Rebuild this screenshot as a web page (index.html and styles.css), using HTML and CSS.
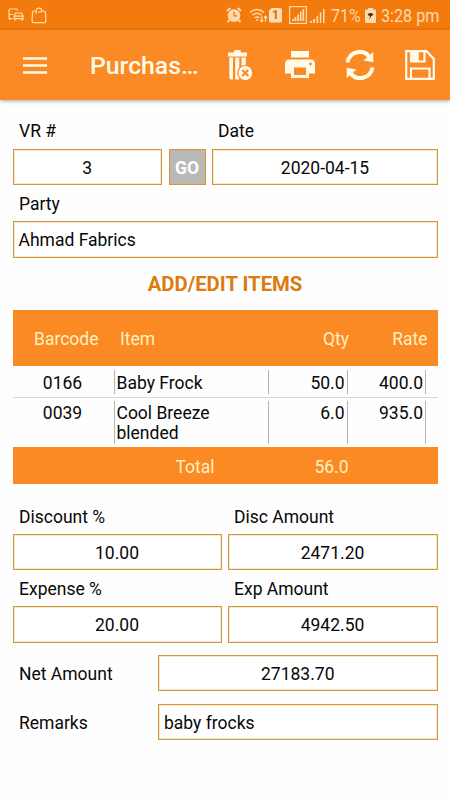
FILE: index.html
```html
<!DOCTYPE html>
<html lang="en">
<head>
<meta charset="utf-8">
<title>Purchase</title>
<link rel="stylesheet" href="styles.css">
</head>
<body>
<header class="status">
  <div class="status-left">
    <svg width="16" height="14" viewBox="0 0 16 14" fill="none" stroke="currentColor" stroke-width="1.2"><path d="M4.5 10.5H1V2.2Q1 1 2.2 1H8.5Q9.5 1 9.5 2.7M1 6.5h4"/><path d="M6.2 11.8V8L7.5 5h6L15 8v3.8M6.2 8.2H15M6.2 10.7H15"/><path d="M2 10.5v1.5M7 11v1.6M14.3 11v1.6" stroke-width="1.5"/></svg>
    <svg width="16" height="17" viewBox="0 0 16 17" fill="none" stroke="currentColor" stroke-width="1.2"><path d="M5.2 4H3Q1.7 4 1.6 5.3L1 13.5Q1 15.7 3 15.7H13Q15 15.7 14.9 13.5L14.4 5.3Q14.3 4 13 4H11"/><path d="M5.2 7V3.5Q5.2 1.2 8 1.2T10.8 3.5V5H7"/></svg>
  </div>
  <div class="status-right">
    <svg class="alarm" width="16" height="16" viewBox="0 0 16 16"><circle cx="8" cy="8.5" r="6.3" fill="currentColor"/><path d="M1 4L4.3 1M15 4L11.7 1M3.5 13L1.5 15M12.500 13L14.500 15" stroke="currentColor" stroke-width="2"/><path d="M8 4.800V8.800H11.300" fill="none" stroke="#f37a0c" stroke-width="1.300"/></svg>
    <svg class="wifi" width="19" height="15" viewBox="0 0 19 15" fill="none" stroke="currentColor" stroke-width="1.500"><path d="M1 4.500Q8 -1.500 15 4.500M3.300 7.300Q8 3.200 12.700 7.300M5.700 10Q8 8 10.300 10"/><circle cx="8" cy="12" r="1.100" fill="currentColor" stroke="none"/><path d="M12.700 8v5.500M11 12l1.700 1.800L14.300 12M16.500 13.700V8.300M14.900 10l1.600-1.800L18.200 10" stroke-width="1.200"/></svg>
    <span class="sim">1</span>
    <svg class="signal-box" width="18" height="18" viewBox="0 0 18 18"><rect x=".6" y=".6" width="16.800" height="16.800" fill="none" stroke="currentColor" stroke-width="1.200"/><path d="M3 13h1.800v2H3zM5.500 11h1.900v4H5.500zM8.300 8.500h1.900V15H8.300zM11 5.700h1.600V15H11zM13.500 3h1.700v12h-1.700z" fill="currentColor"/></svg>
    <svg class="signal" width="15" height="15" viewBox="0 0 15 15"><path d="M0 13h1.800v2H0zM3.200 11H5v4H3.200zM6.500 8h1.700v7H6.500zM9.800 4.500h1.500v10.500H9.800zM13 1h1.500v14H13z" fill="currentColor"/></svg>
    <span class="percent"><b>71%</b></span>
    <svg class="battery" width="11" height="15" viewBox="0 0 11 15"><path d="M3 0h5v1.500h2q1 0 1 1V14q0 1-1 1H1q-1 0-1-1V2.500q0-1 1-1h2z" fill="currentColor"/><path d="M3.300 5.500L6.500 5 8.500 6.800 6.300 8 4.200 11.800 5 8 2.700 7z" fill="#4b250d"/></svg>
    <span class="clock"><b>3:28 pm</b></span>
  </div>
</header>
<nav class="toolbar">
  <svg class="menu" width="24" height="17" viewBox="0 0 24 17"><path d="M0 1.500h24M0 8.500h24M0 15.500h24" stroke="currentColor" stroke-width="2.300"/></svg>
  <h1>Purchas…</h1>
  <div class="actions">
    <svg width="30" height="30" viewBox="0 0 30 30"><path d="M3 2.500h6V1.200Q9 0 10.300 0h4.200Q15.800 0 15.800 1.200V2.500H22v4H3zM4.300 7.500H8V29.500H6.500Q4.300 29.500 4.300 27zM10.200 7.500h4.100V29.500h-4.100zM16.500 7.500H20.800V15L16.500 18z" fill="currentColor"/><circle cx="20.300" cy="23" r="7.500" fill="currentColor" stroke="#fb8a25" stroke-width="1.200"/><path d="M17.300 20l6 6M23.300 20l-6 6" stroke="#fb8a25" stroke-width="2.200"/></svg>
    <svg width="30" height="30" viewBox="0 0 30 30"><path d="M6 1h18v6.500H6z" fill="currentColor"/><path d="M4.500 9.500h21Q30 9.500 30 14v9.500h-6V28H6v-4.500H0V14Q0 9.500 4.500 9.500z" fill="currentColor"/><path d="M9 17.500h12V25H9z" fill="#fb8a25"/><circle cx="25.500" cy="14" r="1.400" fill="#fb8a25"/></svg>
    <svg width="30" height="30" viewBox="0 0 30 30"><path d="M2.500 12.500C4.500 1 18.500-1.500 24.500 7M27.500 17.500C25.500 29 11.500 31.500 5.500 23" fill="none" stroke="currentColor" stroke-width="4"/><path d="M28.300 2V12.300L18.500 10.500zM1.700 28V17.700L11.500 19.500z" fill="currentColor"/></svg>
    <svg width="30" height="30" viewBox="0 0 30 30" fill="none" stroke="currentColor" stroke-width="2.200"><path d="M1.200 1.200H21.500L28.800 9V28.800H1.200zM6 1.200V11.500H19.500V1.200M6 28.800V18.500H24.500V28.800"/><path d="M6 1h7.800v11H6z" fill="currentColor" stroke="none"/></svg>
  </div>
</nav>
<main>
  <section class="top-fields">
    <label class="vr">VR #</label><label class="date">Date</label>
    <div class="box mid">3</div><div class="box go">GO</div><div class="box mid">2020-04-15</div>
  </section>
  <label class="party">Party</label>
  <div class="box">Ahmad Fabrics</div>
  <h2>ADD/EDIT ITEMS</h2>
  <section class="table">
    <div class="row head"><span class="code">Barcode</span><span class="item">Item</span><span class="num">Qty</span><span class="num">Rate</span></div>
    <div class="row line"><span class="code">0166</span><span class="item">Baby Frock</span><span class="num">50.0</span><span class="num">400.0</span></div>
    <div class="row line"><span class="code">0039</span><span class="item">Cool Breeze blended</span><span class="num">6.0</span><span class="num">935.0</span></div>
    <div class="row foot"><span class="total">Total</span><span class="num">56.0</span></div>
  </section>
  <section class="pairs">
    <label>Discount %</label><label>Disc Amount</label>
    <div class="box mid">10.00</div><div class="box mid">2471.20</div>
    <label class="lower">Expense %</label><label class="lower">Exp Amount</label>
    <div class="box mid">20.00</div><div class="box mid">4942.50</div>
  </section>
  <section class="bottom">
    <label>Net Amount</label><div class="box mid">27183.70</div>
    <label>Remarks</label><div class="box">baby frocks</div>
  </section>
</main>
</body>
</html>
```
FILE: styles.css
```css
* { box-sizing: border-box; }
body { margin: 0; background: #fefefe; color: #080808; font: 17.5px/20px Roboto, sans-serif; }
svg { display: block; flex: none; }
.status { height: 30px; background: #f37a0c; color: #ffdfa9; display: flex; justify-content: space-between; align-items: center; padding: 0 11px 0 8px; }
.status-left, .status-right { display: flex; align-items: center; }
.status-left { gap: 7px; }
.status-right { color: #ffd9ac; }
.wifi { margin-left: 7px; }
.sim { width: 13px; height: 15px; margin-left: 1px; background: #ffdcb2; color: #d8690b; border-radius: 2px; clip-path: polygon(25% 0, 100% 0, 100% 100%, 0 100%, 0 20%); font: bold 12px/15px Roboto, sans-serif; text-align: center; }
.signal-box { margin-left: 7px; }
.signal { margin-left: 3px; }
.percent, .clock { font-size: 19px; white-space: nowrap; padding-top: 1px; }
.percent { width: 29px; margin-left: 6px; }
.clock { width: 58px; margin-left: 5px; }
.percent b, .clock b { display: inline-block; font-weight: 400; transform-origin: left; }
.percent b { transform: scaleX(.84); }
.clock b { transform: scaleX(.85); }
.battery { margin-left: 5px; }
.toolbar { height: 70px; background: #fb8a25; color: #fffbe8; display: flex; align-items: center; padding: 0 15px 0 23px; box-shadow: 0 1px 4px rgba(0,0,0,.35); }
h1 { font-size: 24.800px; line-height: 30px; font-weight: 500; margin: 2px 0 0 43px; }
.actions { display: flex; gap: 30px; margin-left: auto; }
main { padding: 21px 12.500px 0; }
label { display: block; padding-left: 6.500px; }
.top-fields { display: grid; grid-template-columns: 149.500px 37px 226px; column-gap: 6.500px; row-gap: 8px; }
.date { grid-column: 3; margin-left: -.5px; }
.vr { grid-column: 1; }
.box { height: 36.250px; border: 1px solid #d2963f; box-shadow: inset 0 0 0 1px rgba(226,176,96,.3); padding: 0 5px; line-height: 36px; background: #fff; }
.mid { text-align: center; }
.go { padding: 0; text-align: center; font-weight: 700; color: #fff; background: #b9b9b9; }
.party { margin: 9px 0 7px; }
h2 { margin: 15px 0; text-align: center; font-size: 20.300px; line-height: 22px; font-weight: 700; color: #db7b10; }
.row { display: grid; }
.head { height: 56.500px; grid-template-columns: 107.500px 150px 79px 78.500px; align-items: center; background: #fb8a25; color: #fff0c0; padding-top: 2px; }
.head .code { padding-left: 21.500px; }
.num { text-align: right; }
.line { grid-template-columns: 102px 154px 79px 78.500px; padding: 4px 0 3px; }
.line + .line { border-top: 1px solid #d8d8d8; padding-top: 3px; }
.line span { min-height: 24px; padding-top: 3px; border-right: 1px solid #b4b4b4; }
.line + .line span { padding-top: 2px; padding-bottom: 1px; }
.line .code { text-align: center; padding-right: 1px; }
.line .item { padding-left: 2px; padding-right: 30px; }
.line .num { padding-right: 2px; }
.foot { height: 37px; grid-template-columns: 202px 134px; align-items: center; background: #fb8a25; color: #fff0c0; padding-top: 2px; }
.total { text-align: right; }
.pairs { display: grid; grid-template-columns: 209px 210px; column-gap: 6px; row-gap: 7px; margin-top: 23px; }
.lower { margin-top: 2px; }
.bottom { display: grid; grid-template-columns: 145.500px 279.500px; row-gap: 12.500px; align-items: center; margin-top: 12.500px; }
.bottom label { padding-top: 2px; }
```
